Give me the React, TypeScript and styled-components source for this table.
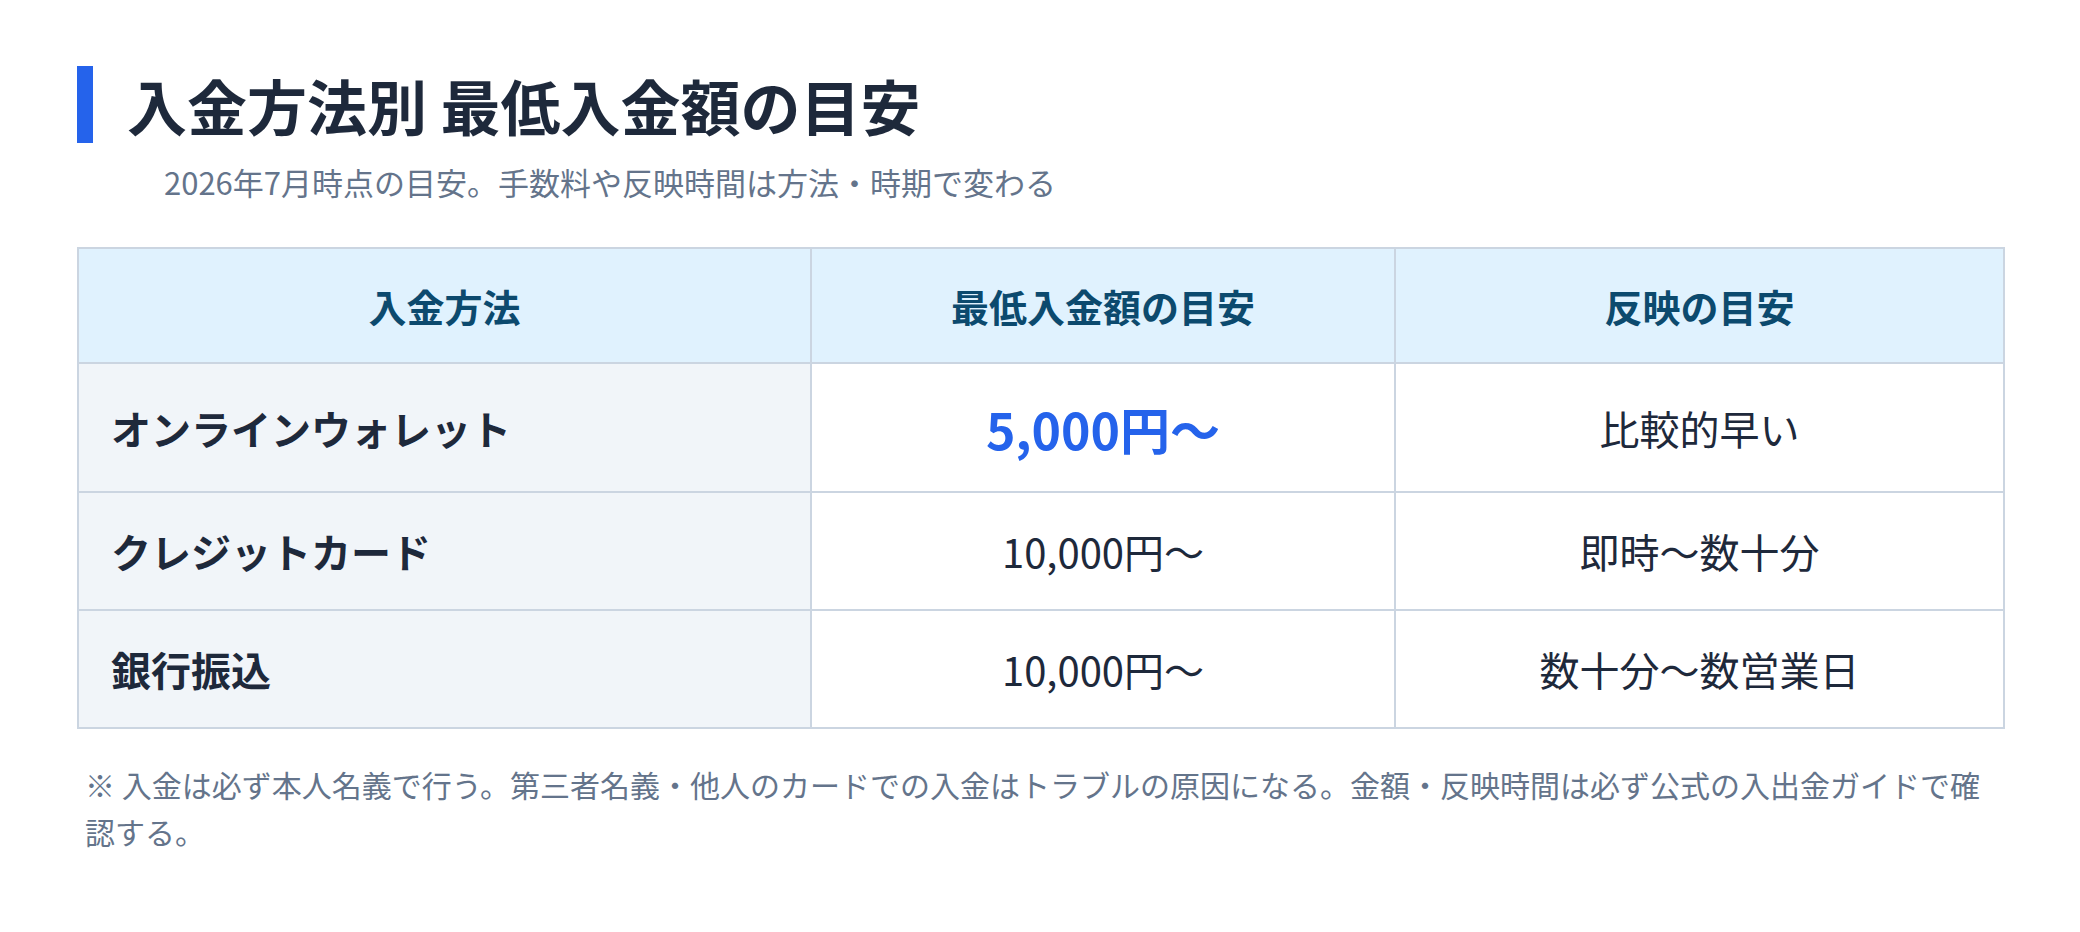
import React from "react";
import styled, { createGlobalStyle } from "styled-components";

interface DepositRow {
  method: string;
  min: string;
  speed: string;
  highlight?: boolean;
}

const rows: DepositRow[] = [
  { method: "オンラインウォレット", min: "5,000円〜", speed: "比較的早い", highlight: true },
  { method: "クレジットカード", min: "10,000円〜", speed: "即時〜数十分" },
  { method: "銀行振込", min: "10,000円〜", speed: "数十分〜数営業日" },
];

const GlobalStyle = createGlobalStyle`
  html, body {
    margin: 0;
    padding: 0;
    background: #ffffff;
  }
  body {
    font-family: "Noto Sans CJK JP", "Noto Sans", sans-serif;
    color: #1e293b;
  }
`;

const Page = styled.div`
  padding: 66px 77px;
`;

const Title = styled.h2`
  margin: 0;
  border-left: 16px solid #2563eb;
  padding-left: 34px;
  font-size: 60px;
  line-height: 77px;
  font-weight: 700;
  color: #1e293b;
`;

const Subtitle = styled.p`
  margin: 17px 0 0;
  padding-left: 87px;
  font-size: 31px;
  line-height: 44px;
  color: #64748b;
`;

const Table = styled.table`
  margin-top: 43px;
  width: 1926px;
  table-layout: fixed;
  border-collapse: collapse;
  border: 2px solid #cbd5e1;
`;

const HeadCell = styled.th`
  height: 113px;
  padding: 0;
  background: #e0f2fe;
  border: 2px solid #cbd5e1;
  color: #0c4a6e;
  font-size: 38px;
  font-weight: 700;
  text-align: center;
`;

const Row = styled.tr<{ $tall?: boolean }>`
  height: ${(p) => (p.$tall ? "129px" : "118px")};
`;

const MethodCell = styled.td`
  padding: 0 32px;
  background: #f1f5f9;
  border: 2px solid #cbd5e1;
  font-size: 40px;
  font-weight: 700;
  color: #1e293b;
`;

const ValueCell = styled.td<{ $accent?: boolean }>`
  padding: 0;
  background: #ffffff;
  border: 2px solid #cbd5e1;
  text-align: center;
  font-size: ${(p) => (p.$accent ? "50px" : "40px")};
  font-weight: ${(p) => (p.$accent ? 700 : 400)};
  color: ${(p) => (p.$accent ? "#2563eb" : "#1e293b")};
`;

const Note = styled.p`
  margin: 32px 0 0;
  padding-left: 8px;
  width: 1918px;
  font-size: 30px;
  line-height: 47px;
  color: #64748b;
`;

export default function App() {
  return (
    <>
      <GlobalStyle />
      <Page>
        <Title>入金方法別 最低入金額の目安</Title>
        <Subtitle>2026年7月時点の目安。手数料や反映時間は方法・時期で変わる</Subtitle>
        <Table>
          <colgroup>
            <col style={{ width: 733 }} />
            <col style={{ width: 584 }} />
            <col style={{ width: 609 }} />
          </colgroup>
          <thead>
            <tr>
              <HeadCell>入金方法</HeadCell>
              <HeadCell>最低入金額の目安</HeadCell>
              <HeadCell>反映の目安</HeadCell>
            </tr>
          </thead>
          <tbody>
            {rows.map((row) => (
              <Row key={row.method} $tall={row.highlight}>
                <MethodCell>{row.method}</MethodCell>
                <ValueCell $accent={row.highlight}>{row.min}</ValueCell>
                <ValueCell>{row.speed}</ValueCell>
              </Row>
            ))}
          </tbody>
        </Table>
        <Note>
          ※ 入金は必ず本人名義で行う。第三者名義・他人のカードでの入金はトラブルの原因になる。金額・反映時間は必ず公式の入出金ガイドで確認する。
        </Note>
      </Page>
    </>
  );
}
